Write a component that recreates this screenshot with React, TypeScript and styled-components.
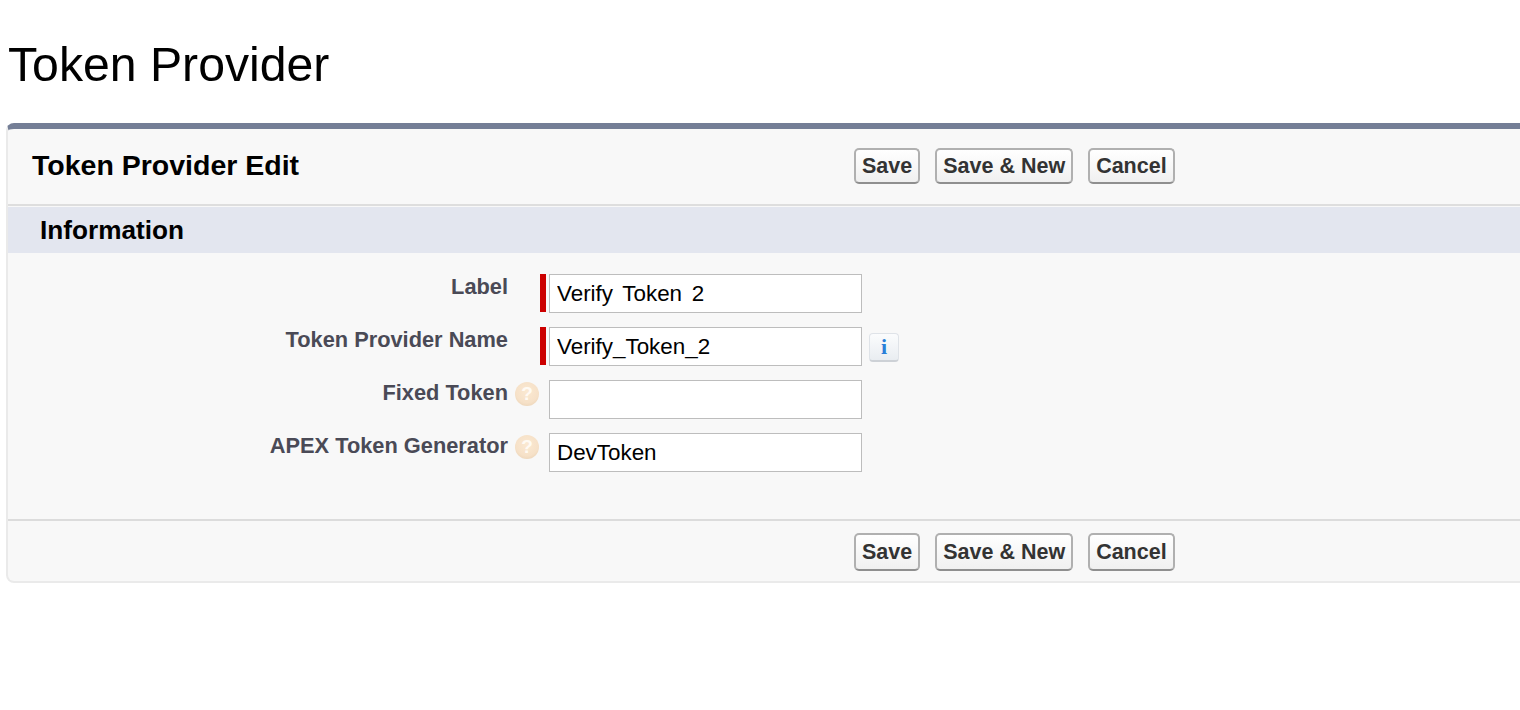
import React from "react";
import styled, { createGlobalStyle } from "styled-components";

const Global = createGlobalStyle`
  html, body { margin: 0; padding: 0; background: #fff; overflow: hidden; }
  body { font-family: "Liberation Sans", Arial, sans-serif; color: #000; }
`;
const Page = styled.div`
  width: 1520px; height: 710px; overflow: hidden; padding-top: 37px; box-sizing: border-box;
`;
const Title = styled.h1`
  margin: 0 0 31px 8px; font-size: 48.2px; line-height: 55px; font-weight: 400; color: #000;
`;
const Panel = styled.section`
  margin-left: 6px; width: 1640px; box-sizing: border-box; background: #f8f8f8;
  border: 2px solid #eaeaea; border-top: 6px solid #747e96; border-radius: 8px;
`;
const Header = styled.div`
  display: flex; align-items: center; box-sizing: border-box; padding: 0 0 2px 24px;
  border-bottom: 2px solid #dedede; height: 77px;
`;
const PanelTitle = styled.h2`
  margin: 0 0 2px; width: 822px; font-size: 28.5px; line-height: 32px; font-weight: 700; color: #000;
`;
const Buttons = styled.div`
  display: flex; gap: 15px; align-items: center;
`;
const Button = styled.button`
  height: ${(p: { $h: number }) => p.$h}px; padding: 1px 6px 0; box-sizing: border-box; font-family: inherit;
  font-size: 21.5px; font-weight: 700; color: #333; border-radius: 5px;
  border: 2px solid #b0b0b0; border-bottom-color: #8f8f8f;
  background: linear-gradient(#fff, #f0f0f0);
`;
const Section = styled.div`
  margin-top: 1px; height: 46px; background: #e3e6ef; padding-left: 32px;
  font-size: 26.2px; font-weight: 700; line-height: 46px; color: #000;
`;
const Form = styled.div`
  height: 268px; box-sizing: border-box; padding-top: 21px; display: flex; flex-direction: column; gap: 14px;
  border-bottom: 2px solid #dcdcdc;
`;
const Row = styled.div`
  display: flex; height: 39px; align-items: flex-start;
`;
const LabelCell = styled.div`
  width: 532px; display: flex; justify-content: flex-end; align-items: center; gap: 7px;
  height: 26px; padding-right: ${(p: { $help?: boolean }) => (p.$help ? 0 : 32)}px; box-sizing: border-box;
`;
const Label = styled.label`
  font-size: 21.8px; font-weight: 700; color: #4a4a56; line-height: 26px;
`;
const Help = styled.span`
  width: 24px; height: 24px; border-radius: 50%; display: flex; flex: none; align-items: center; justify-content: center;
  margin-top: 2px; margin-right: 1px;
  background: radial-gradient(circle at 50% 40%, #fbe9d2 0%, #f6e1c8 60%, #e4ccae 100%);
  color: #fffaf3; font-size: 19px; font-weight: 700;
`;
const Req = styled.span`
  width: 6px; height: 38px; flex: none; background: ${(p: { $on?: boolean }) => (p.$on ? "#c00" : "transparent")};
  margin-right: 3px;
`;
const Input = styled.input`
  width: 313px; height: 39px; box-sizing: border-box; border: 1px solid #bdbdbd; background: #fff;
  padding: 0 7px; font-family: inherit; font-size: 22.4px; word-spacing: 3.5px; color: #000; border-radius: 0; outline: none;
`;
const Info = styled.span`
  width: 30px; height: 29px; margin: 6px 0 0 7px; border-radius: 4px; box-sizing: border-box;
  border: 1px solid #dfe3e8; border-bottom: 2px solid #cdd1d6;
  background: linear-gradient(#fbfcfd, #e9edf1); display: flex; align-items: center; justify-content: center;
  color: #2a7fd8; font: 700 22px "Liberation Serif", serif;
`;
const Footer = styled.div`
  height: 60px; box-sizing: border-box; padding: 12px 0 0 846px;
`;

const rows = [
  { label: "Label", req: true, value: "Verify Token 2" },
  { label: "Token Provider Name", req: true, value: "Verify_Token_2", info: true },
  { label: "Fixed Token", help: true, value: "" },
  { label: "APEX Token Generator", help: true, value: "DevToken" },
];

const ActionButtons = ({ h }: { h: number }) => (
  <Buttons>
    <Button $h={h}>Save</Button>
    <Button $h={h}>Save &amp; New</Button>
    <Button $h={h}>Cancel</Button>
  </Buttons>
);

export default function App() {
  return (
    <Page>
      <Global />
      <Title>Token Provider</Title>
      <Panel>
        <Header>
          <PanelTitle>Token Provider Edit</PanelTitle>
          <ActionButtons h={36} />
        </Header>
        <Section>Information</Section>
        <Form>
          {rows.map((r) => (
            <Row key={r.label}>
              <LabelCell $help={r.help}>
                <Label>{r.label}</Label>
                {r.help && <Help>?</Help>}
              </LabelCell>
              <Req $on={r.req} />
              <Input readOnly value={r.value} />
              {r.info && <Info>i</Info>}
            </Row>
          ))}
        </Form>
        <Footer>
          <ActionButtons h={38} />
        </Footer>
      </Panel>
    </Page>
  );
}
